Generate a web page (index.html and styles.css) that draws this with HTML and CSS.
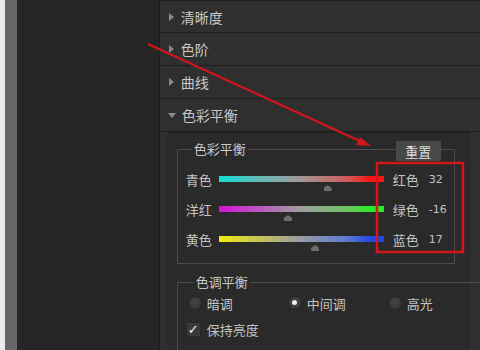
FILE: index.html
```html
<!DOCTYPE html>
<html>
    <head>
        <title>色彩平衡</title>
        <link rel="stylesheet" href="styles.css">
    </head>
    <body>
        <div class="app">
            <div class="edge"></div>
            <div class="canvas"></div>
            <div class="panel">
                <div class="row"><span class="tri"></span>清晰度</div>
                <div class="row"><span class="tri"></span>色阶</div>
                <div class="row"><span class="tri"></span>曲线</div>
                <div class="row"><span class="tri down"></span>色彩平衡</div>
                <div class="inner">
                    <fieldset class="group balance">
                        <legend>色彩平衡</legend>
                        <button class="reset">重置</button>
                        <div class="slider">
                            <span class="left">青色</span>
                            <div class="track cyan-red">
                                <span class="thumb" style="left: 66%"></span>
                            </div>
                            <span class="right">红色</span>
                            <span class="val">32</span>
                        </div>
                        <div class="slider">
                            <span class="left">洋红</span>
                            <div class="track magenta-green">
                                <span class="thumb" style="left: 42%"></span>
                            </div>
                            <span class="right">绿色</span>
                            <span class="val">-16</span>
                        </div>
                        <div class="slider">
                            <span class="left">黄色</span>
                            <div class="track yellow-blue">
                                <span class="thumb" style="left: 58.5%"></span>
                            </div>
                            <span class="right">蓝色</span>
                            <span class="val">17</span>
                        </div>
                    </fieldset>
                    <fieldset class="group tone">
                        <legend>色调平衡</legend>
                        <div class="radios">
                            <label class="opt"><span class="radio"></span>暗调</label>
                            <label class="opt"><span class="radio on"></span>中间调</label>
                            <label class="opt"><span class="radio"></span>高光</label>
                        </div>
                        <label class="check"><span class="box">&#10003;</span>保持亮度</label>
                    </fieldset>
                </div>
            </div>
            <svg class="marks" width="480" height="350" viewBox="0 0 480 350">
                <line x1="148" y1="44" x2="364" y2="143" stroke="#d4151a" stroke-width="2.2"/>
                <polygon points="371,146 356,145 360,137" fill="#d4151a"/>
                <rect x="377" y="163" width="86" height="89" fill="none" stroke="#d4151a" stroke-width="2.5"/>
            </svg>
        </div>
    </body>
</html>
```

FILE: styles.css
```css
body {
    margin: 0;
    padding: 0;
    background: #2e2e2e;
    font-family: "Noto Sans CJK SC", "Noto Sans", sans-serif;
    color: #c4c4c4;
}

.app {
    position: relative;
    display: flex;
    width: 480px;
    height: 350px;
    overflow: hidden;
}

.edge {
    width: 12px;
    background: #676767;
    border-left: 5px solid #ececec;
}

.canvas {
    width: 142px;
    background-color: #252525;
    background-image: radial-gradient(#2d2d2d 30%, transparent 40%);
    background-size: 3px 3px;
}

.panel {
    width: 321px;
    background: #2f2f2f;
    border-left: 1px solid #1d1d1d;
    display: flex;
    flex-direction: column;
}

.row {
    flex-shrink: 0;
    height: 32px;
    border-bottom: 1px solid #1e1e1e;
    display: flex;
    align-items: center;
    font-size: 14px;
    color: #c8c8c8;
    padding-left: 9px;
}

.row:first-child {
    border-top: 1px solid #1e1e1e;
    height: 31px;
}

.tri {
    width: 0;
    height: 0;
    border-top: 4px solid transparent;
    border-bottom: 4px solid transparent;
    border-left: 5px solid #8a8a8a;
    margin-right: 7px;
}

.tri.down {
    border-left: 4px solid transparent;
    border-right: 4px solid transparent;
    border-top: 5px solid #8a8a8a;
    border-bottom: 0;
    margin-left: -1px;
    margin-right: 6px;
}

.inner {
    flex-shrink: 0;
    margin-left: 7px;
    width: 303px;
    height: 220px;
    background: #2a2a2a;
    border-top: 1px solid #222;
    padding: 8px 0 0 10px;
    box-sizing: border-box;
}

.group {
    position: relative;
    margin: 0;
    width: 278px;
    box-sizing: border-box;
    border: 1px solid #4c4c4c;
    padding: 7px 0 9px 8px;
}

.group legend {
    font-size: 13px;
    line-height: 16px;
    padding: 0 2px;
    margin-left: 6px;
    color: #c8c8c8;
}

.reset {
    position: absolute;
    top: -16px;
    right: 13px;
    width: 45px;
    height: 20px;
    border: 0;
    background: #484848;
    color: #dcdcdc;
    font-family: inherit;
    font-size: 13px;
    padding: 0;
}

.slider {
    height: 30px;
    display: flex;
    align-items: center;
    font-size: 13px;
}

.left {
    width: 33px;
}

.track {
    position: relative;
    width: 165px;
    height: 6px;
}

.cyan-red {
    background: linear-gradient(to right, #14ddd4, #5cc0bc 22%, #9e9a98 48%, #d25a5a 78%, #ff1414 92%);
}

.magenta-green {
    background: linear-gradient(to right, #d214d4, #c050c4 22%, #a09aa0 48%, #6ac460 78%, #28ec28 92%);
}

.yellow-blue {
    background: linear-gradient(to right, #f0ec14, #c8c650 22%, #9c9ea0 48%, #5a7ad0 78%, #2048e4 92%);
}

.thumb {
    position: absolute;
    top: 9px;
    width: 8px;
    height: 6px;
    margin-left: -4px;
    background: #6e6e6e;
    clip-path: polygon(50% 0, 100% 45%, 100% 100%, 0 100%, 0 45%);
}

.right {
    margin-left: 9px;
    width: 36px;
}

.val {
    font-size: 11px;
    font-family: "DejaVu Sans", sans-serif;
    color: #c0c0c0;
}

.tone {
    margin-top: 10px;
    padding: 0 0 20px 10px;
}

.radios {
    display: flex;
    height: 26px;
    align-items: center;
}

.opt {
    width: 100px;
    display: flex;
    align-items: center;
    font-size: 13px;
}

.radio {
    width: 12px;
    height: 12px;
    border-radius: 50%;
    background: radial-gradient(circle at 50% 40%, #444, #333);
    border: 1px solid #262626;
    margin-right: 5px;
    position: relative;
}

.radio.on::after {
    content: "";
    position: absolute;
    left: 3px;
    top: 3px;
    width: 5px;
    height: 5px;
    border-radius: 50%;
    background: #eeeeee;
}

.check {
    display: flex;
    align-items: center;
    height: 26px;
    font-size: 13px;
    margin-left: -2px;
}

.box {
    width: 13px;
    height: 13px;
    background: #3a3a3a;
    border: 1px solid #262626;
    color: #f4f4f4;
    font-size: 13px;
    line-height: 13px;
    text-align: center;
    margin-right: 6px;
    font-family: "DejaVu Sans", sans-serif;
}

.marks {
    position: absolute;
    left: 0;
    top: 0;
}
```
